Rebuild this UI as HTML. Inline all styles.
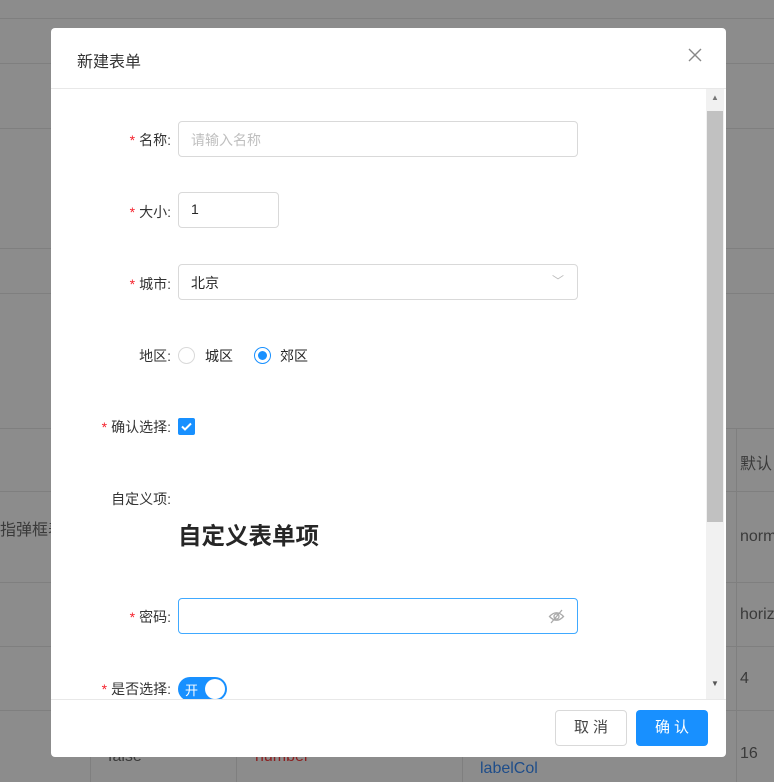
<!DOCTYPE html>
<html><head><meta charset="utf-8"><style>
*{box-sizing:border-box;margin:0;padding:0}
body{width:774px;height:782px;overflow:hidden;background:#8c8c8c;font-family:"Liberation Sans","Noto Sans CJK SC",sans-serif;font-size:14px;color:#262626;position:relative}
.hl{position:absolute;left:0;width:774px;height:1px;background:#7f7f7f}
.vl{position:absolute;width:1px;background:#7f7f7f}
.bt{position:absolute;font-size:16px;color:#3a3a3a}
.modal{position:absolute;left:51px;top:28px;width:675px;height:729px;background:#fff;border-radius:4px;overflow:hidden}
.hd{height:61px;border-bottom:1px solid #e8e8e8;padding:20px 26px;font-size:16px;color:#333;position:relative}
.x{position:absolute;right:24px;top:20px}
.body{position:absolute;top:61px;left:0;width:675px;height:610px;overflow:hidden}
.sb{position:absolute;right:2px;top:0;width:18px;height:610px;background:#f1f1f1}
.th{position:absolute;left:1px;top:22px;width:16px;height:411px;background:#c1c1c1}
.lab{position:absolute;right:555px;text-align:right;white-space:nowrap;color:#333}
.lab b{color:#f5222d;font-weight:normal;margin-right:4px}
.inp{position:absolute;left:127px;border:1px solid #d9d9d9;border-radius:4px;height:36px;padding:8px 12px;color:#262626}
.ft{position:absolute;bottom:0;left:0;width:675px;height:58px;border-top:1px solid #e8e8e8}
.btn{position:absolute;top:10px;height:36px;border-radius:4px;font-size:15px;text-align:center;line-height:36px;letter-spacing:4px;padding-left:4px}
</style></head><body>
<div class="hl" style="top:18px"></div><div class="hl" style="top:63px"></div><div class="hl" style="top:128px"></div><div class="hl" style="top:248px"></div><div class="hl" style="top:293px"></div><div class="hl" style="top:428px"></div><div class="hl" style="top:491px"></div><div class="hl" style="top:582px"></div><div class="hl" style="top:646px"></div><div class="hl" style="top:710px"></div>
<div class="vl" style="left:90px;top:710px;height:72px"></div><div class="vl" style="left:236px;top:710px;height:72px"></div><div class="vl" style="left:462px;top:710px;height:72px"></div><div class="vl" style="left:736px;top:428px;height:354px"></div>
<div class="bt" style="left:0;top:516px">指弹框表</div>
<div class="bt" style="left:740px;top:450px">默认</div>
<div class="bt" style="left:740px;top:528px">norm</div>
<div class="bt" style="left:740px;top:606px">horiz</div>
<div class="bt" style="left:740px;top:670px">4</div>
<div class="bt" style="left:740px;top:745px">16</div>
<div class="bt" style="left:108px;top:748px">false</div>
<div class="bt" style="left:255px;top:748px;color:#8b2020">number</div>
<div class="bt" style="left:480px;top:760px;color:#1e4d8a">labelCol</div>
<div class="modal">
<div class="hd">新建表单<svg class="x" width="14" height="14" viewBox="0 0 14 14"><path d="M1 1L13 13M13 1L1 13" stroke="#888" stroke-width="1.4"/></svg></div>
<div class="body">
<div class="lab" style="top:41px"><b>*</b>名称:</div>
<div class="inp" style="top:32px;width:400px;color:#bfbfbf">请输入名称</div>
<div class="lab" style="top:113px"><b>*</b>大小:</div>
<div class="inp" style="top:103px;width:101px">1</div>
<div class="lab" style="top:185px"><b>*</b>城市:</div>
<div class="inp" style="top:175px;width:400px">北京<span style="position:absolute;right:13px;top:7px;color:#bbb;font-size:12px">﹀</span></div>
<div class="lab" style="top:257px">地区:</div>
<div style="position:absolute;left:127px;top:258px;width:17px;height:17px;border:1px solid #d9d9d9;border-radius:50%"></div>
<div style="position:absolute;left:154px;top:257px">城区</div>
<div style="position:absolute;left:203px;top:258px;width:17px;height:17px;border:1px solid #1890ff;border-radius:50%"><div style="position:absolute;left:3px;top:3px;width:9px;height:9px;background:#1890ff;border-radius:50%"></div></div>
<div style="position:absolute;left:229px;top:257px">郊区</div>
<div class="lab" style="top:328px"><b>*</b>确认选择:</div>
<div style="position:absolute;left:127px;top:329px;width:17px;height:17px;background:#1890ff;border-radius:2px"><svg width="17" height="17"><path d="M4 8.5l3 3 6-6" stroke="#fff" stroke-width="2" fill="none"/></svg></div>
<div class="lab" style="top:400px">自定义项:</div>
<div style="position:absolute;left:127px;top:428px;font-size:23.5px;font-weight:bold;color:#262626">自定义表单项</div>
<div class="lab" style="top:518px"><b>*</b>密码:</div>
<div class="inp" style="top:509px;width:400px;border-color:#40a9ff"><svg style="position:absolute;right:12px;top:9px" width="17" height="17" viewBox="0 0 17 17"><path d="M1.5 8.5Q8.5 1 15.5 8.5Q8.5 16 1.5 8.5Z" stroke="#aaa" stroke-width="1.3" fill="none"/><circle cx="8.5" cy="8.5" r="2.5" stroke="#aaa" stroke-width="1.3" fill="none"/><path d="M3 15L14 2" stroke="#aaa" stroke-width="1.3"/></svg></div>
<div class="lab" style="top:590px"><b>*</b>是否选择:</div>
<div style="position:absolute;left:127px;top:588px;width:49px;height:24px;background:#1890ff;border-radius:12px;color:#fff;font-size:13px;padding:3px 7px">开<div style="position:absolute;right:2px;top:2px;width:20px;height:20px;background:#fff;border-radius:50%"></div></div>
<div class="sb"><div class="th"></div><span style="position:absolute;left:5px;top:4px;font-size:8px;color:#777">▲</span><span style="position:absolute;left:5px;top:590px;font-size:8px;color:#555">▼</span></div>
</div>
<div class="ft">
<div class="btn" style="left:504px;width:72px;border:1px solid #d9d9d9;color:#444;line-height:34px">取消</div>
<div class="btn" style="left:585px;width:72px;background:#1890ff;color:#fff">确认</div>
</div>
</div>
</body></html>
